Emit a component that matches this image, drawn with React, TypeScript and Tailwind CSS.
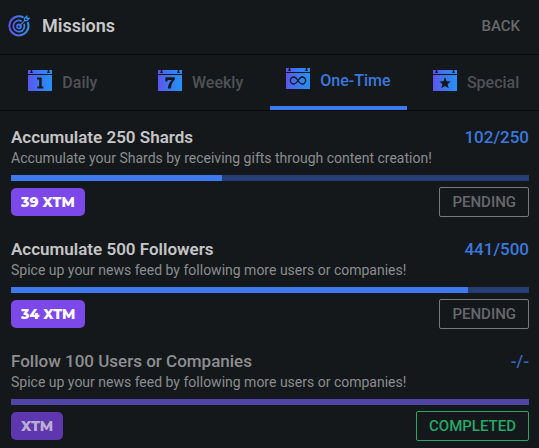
import React from "react";

type TabKind = "daily" | "weekly" | "once" | "special";

const tabs: { kind: TabKind; label: string }[] = [
  { kind: "daily", label: "Daily" },
  { kind: "weekly", label: "Weekly" },
  { kind: "once", label: "One-Time" },
  { kind: "special", label: "Special" },
];

type Mission = {
  title: string;
  description: string;
  count: string;
  percent: number;
  reward: string;
  completed: boolean;
};

const missions: Mission[] = [
  {
    title: "Accumulate 250 Shards",
    description: "Accumulate your Shards by receiving gifts through content creation!",
    count: "102/250",
    percent: 40.8,
    reward: "39 XTM",
    completed: false,
  },
  {
    title: "Accumulate 500 Followers",
    description: "Spice up your news feed by following more users or companies!",
    count: "441/500",
    percent: 88.2,
    reward: "34 XTM",
    completed: false,
  },
  {
    title: "Follow 100 Users or Companies",
    description: "Spice up your news feed by following more users or companies!",
    count: "-/-",
    percent: 100,
    reward: "XTM",
    completed: true,
  },
];

function TargetIcon() {
  return (
    <svg className="size-[22px] shrink-0" viewBox="0 0 22 22" fill="none" stroke="url(#target)" aria-hidden="true">
      <defs>
        <linearGradient id="target" gradientUnits="userSpaceOnUse" x1="0" y1="11" x2="22" y2="11">
          <stop stopColor="#6350ea" />
          <stop offset="1" stopColor="#2a9af5" />
        </linearGradient>
      </defs>
      <path d="M15.6 2.6A9.5 9.5 0 1 0 19.6 7" strokeWidth="2" />
      <path d="M13.7 6.2A5.6 5.6 0 1 0 16 8.7" strokeWidth="1.7" />
      <circle cx="11" cy="11.4" r="2" strokeWidth="1.6" />
      <path d="M11 11.4 17 5.4M16.6 5.6V3.2L18.8 1.2V3.4H21L19 5.6Z" strokeWidth="1.2" />
    </svg>
  );
}

function CalendarIcon({ kind }: { kind: TabKind }) {
  const id = `calendar-${kind}`;
  return (
    <svg className="mb-1 h-[22px] w-6 shrink-0" viewBox="0 0 24 22" aria-hidden="true">
      <defs>
        <linearGradient id={id} x1="0" y1="0" x2="1" y2="0">
          <stop stopColor="#5c55ee" />
          <stop offset="0.5" stopColor="#3c78f5" />
          <stop offset="1" stopColor="#2690fa" />
        </linearGradient>
      </defs>
      <path d="M0 0H24V21H0Z" fill={`url(#${id})`} />
      <path d="M0 4.5H24" stroke="#14181b" />
      <path d="M3.5 0V3M20.5 0V3" stroke="#14181b" strokeWidth="1.4" />
      <path d="M2.3 2.4H4.7M19.3 2.4H21.7" stroke="#14181b" strokeWidth="1.3" />
      {kind === "daily" && (
        <path d="M9 9.5V7.4H13.7V16.6H15.4V18.5H9.4V16.6H11.2V9.5Z" fill="#14181b" />
      )}
      {kind === "weekly" && (
        <path d="M7.4 7.2H16.8V9.5C14.4 12.2 13.2 14.7 12.8 18.6H9.8C10.1 15.2 11.4 12.5 13.8 9.9H9.6V11.6H7.4Z" fill="#14181b" />
      )}
      {kind === "once" && (
        <path
          d="M12 12.5C10.5 10.2 9.6 9 7.9 9A3.5 3.5 0 0 0 7.9 16C9.6 16 10.5 14.8 12 12.5S14.4 9 16.1 9A3.5 3.5 0 0 1 16.1 16C14.4 16 13.5 14.8 12 12.5Z"
          fill="none"
          stroke="#14181b"
          strokeWidth="1.3"
        />
      )}
      {kind === "special" && (
        <path d="M12 7 13.6 11.2 17.8 11.4 14.6 14.1 15.7 18.3 12 16 8.3 18.3 9.4 14.1 6.2 11.4 10.4 11.2Z" fill="#14181b" />
      )}
    </svg>
  );
}

function MissionRow({ mission }: { mission: Mission }) {
  const { title, description, count, percent, reward, completed } = mission;
  return (
    <li className="flex flex-col">
      <div className="flex items-center justify-between text-[17px] leading-6 font-medium">
        <h2 className={completed ? "text-[#8d8e8f]" : "font-semibold text-[#c4c5c5]"}>{title}</h2>
        <span className={completed ? "text-[#346abf]" : "text-[#3b78dd]"}>{count}</span>
      </div>
      <p className="text-sm leading-[18px] text-[#8b8d8e]">{description}</p>
      <div
        role="progressbar"
        aria-label={title}
        aria-valuenow={percent}
        className={`mt-2 h-1.5 ${completed ? "bg-[#5044a6]" : "bg-[#253e75]"}`}
      >
        <div
          className={`h-full ${completed ? "bg-[#5044a6]" : "bg-[#3d7aee]"}`}
          style={{ width: `${percent}%` }}
        />
      </div>
      <div className="mt-1.5 flex items-center justify-between">
        <span
          className={`flex h-7 items-center rounded-[5px] px-2.5 font-[Montserrat,Inter,sans-serif] text-sm font-extrabold ${
            completed ? "bg-[#5e36ad] text-[#bbaed3]" : "bg-[#7d48ea] text-white"
          }`}
        >
          {reward}
        </span>
        <button
          type="button"
          className={`h-[30px] rounded-xs border px-3 text-[15px] font-medium ${
            completed ? "border-[#27a768] text-[#27a768]" : "border-[#77797b] text-[#66686b]"
          }`}
        >
          {completed ? "COMPLETED" : "PENDING"}
        </button>
      </div>
    </li>
  );
}

export default function App() {
  return (
    <main className="min-h-screen overflow-hidden bg-[#14181b] font-[Roboto,sans-serif]">
      <header className="flex h-[54px] items-center justify-between pr-[19px] pb-0.5 pl-2">
        <div className="flex items-center gap-3">
          <TargetIcon />
          <h1 className="text-lg font-semibold text-[#c8c9c9]">Missions</h1>
        </div>
        <button type="button" className="text-[15px] font-medium text-[#66686b]">
          BACK
        </button>
      </header>
      <nav className="-mx-1.5 grid h-[57px] grid-cols-4 border-y border-[#090c0e]">
        {tabs.map(({ kind, label }) => {
          const active = kind === "once";
          return (
            <button
              key={kind}
              type="button"
              aria-pressed={active}
              className={`flex items-center justify-center gap-2.5 text-base font-medium ${
                active ? "border-b-4 border-[#3d7aee] text-[#3b78dd]" : "text-[#505256]"
              }`}
            >
              <CalendarIcon kind={kind} />
              {label}
            </button>
          );
        })}
      </nav>
      <ul className="flex flex-col gap-5 px-[10px] pt-[14px] pl-[11px]">
        {missions.map((mission) => (
          <MissionRow key={mission.title} mission={mission} />
        ))}
      </ul>
    </main>
  );
}
